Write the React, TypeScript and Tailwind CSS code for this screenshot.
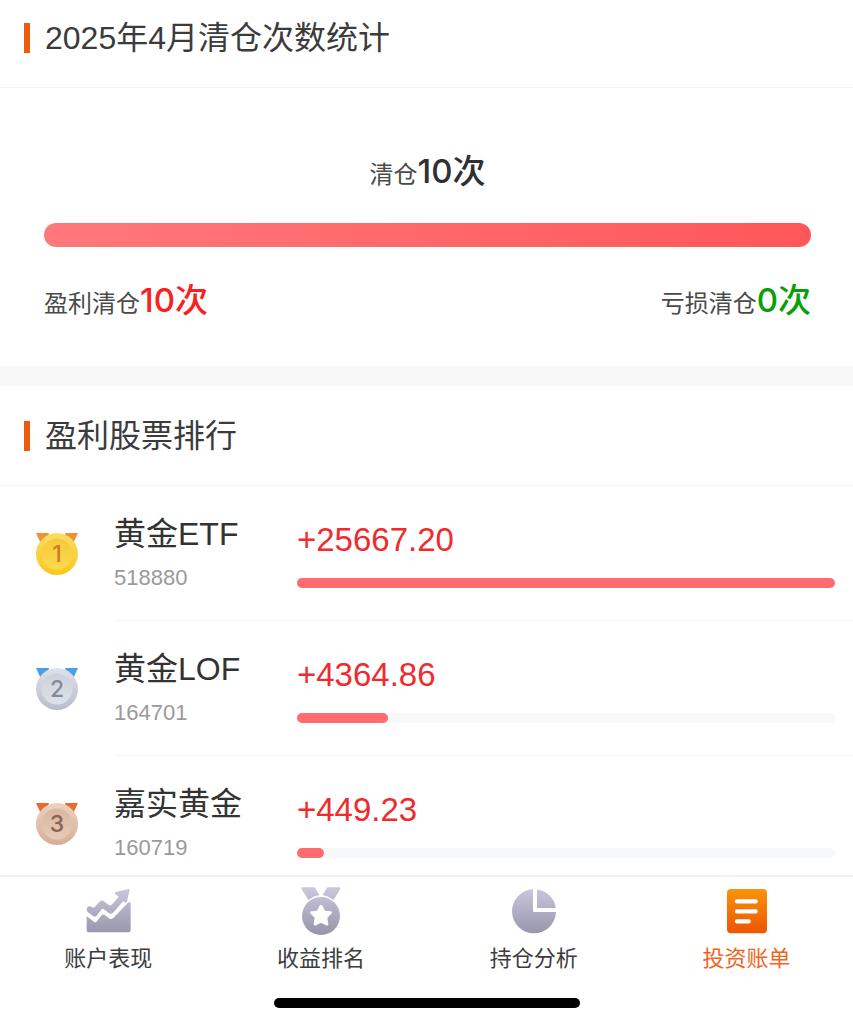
import type { ReactNode } from 'react';

type Medal = {
  ribbon: string;
  rim: [string, string];
  face: [string, string];
  digit: string;
};

type Stock = {
  name: string;
  code: string;
  profit: string;
  percent: number;
  medal: Medal;
};

const stocks: Stock[] = [
  {
    name: '黄金ETF',
    code: '518880',
    profit: '+25667.20',
    percent: 100,
    medal: { ribbon: '#f0913a', rim: ['#fbdc62', '#f9c81c'], face: ['#f6c93c', '#fcd94c'], digit: '#cf7a22' },
  },
  {
    name: '黄金LOF',
    code: '164701',
    profit: '+4364.86',
    percent: 17,
    medal: { ribbon: '#4a9fe6', rim: ['#dfe2ea', '#b9bccb'], face: ['#cbd0da', '#dde2e9'], digit: '#868b97' },
  },
  {
    name: '嘉实黄金',
    code: '160719',
    profit: '+449.23',
    percent: 5,
    medal: { ribbon: '#ea6a2c', rim: ['#ecd2c0', '#d6ae95'], face: ['#d9b7a1', '#e6cab7'], digit: '#8a6350' },
  },
];

function MedalIcon({ rank, medal }: { rank: number; medal: Medal }) {
  return (
    <svg viewBox="0 0 42 42" className="h-[42px] w-[42px] shrink-0" role="img" aria-label={`第${rank}名`}>
      <defs>
        <linearGradient id={`rim-${rank}`} x1="0" y1="0" x2="0" y2="1">
          <stop offset="0" stopColor={medal.rim[0]} />
          <stop offset="1" stopColor={medal.rim[1]} />
        </linearGradient>
        <linearGradient id={`face-${rank}`} x1="0" y1="0" x2="0" y2="1">
          <stop offset="0" stopColor={medal.face[0]} />
          <stop offset="1" stopColor={medal.face[1]} />
        </linearGradient>
      </defs>
      <path d="M0 0H13L10 12L6 13ZM42 0H29L32 12L36 13Z" fill={medal.ribbon} />
      <circle cx="21" cy="21" r="21" fill={`url(#rim-${rank})`} />
      <circle cx="21" cy="21" r="15.500" fill={`url(#face-${rank})`} />
      <text x="21" y="29" textAnchor="middle" fontSize="23" fontWeight="500" fill={medal.digit} className="font-['Inter',sans-serif]">
        {rank}
      </text>
    </svg>
  );
}

function NavIcon({ id, colors = ['#cac7dd', '#9896aa'], children }: { id: string; colors?: [string, string]; children: ReactNode }) {
  return (
    <svg viewBox="0 0 144 144" className="h-12 w-12" fill={`url(#${id})`} aria-hidden="true">
      <defs>
        <linearGradient id={id} gradientUnits="userSpaceOnUse" x1="72" y1="4" x2="72" y2="140">
          <stop offset="0" stopColor={colors[0]} />
          <stop offset="1" stopColor={colors[1]} />
        </linearGradient>
      </defs>
      {children}
    </svg>
  );
}

const tabs = [
  {
    label: '账户表现',
    icon: (
      <NavIcon id="nav-chart">
        <path d="M8 67Q8 60 14 58Q19 57 23 60Q28 64 32 60L48 43Q54 38 60 43L74 54Q79 57 83 53L104 30L93 20Q91 16 96 15L134 6Q138 6 137 10L128 45Q126 49 122 46L118 42L87 77Q81 83 74 78L59 66Q56 64 53 67L38 86Q33 91 27 87L11 75Q8 73 8 67Z" />
        <path d="M8 88L30 104Q35 108 39 103L53 85Q57 80 62 84L77 95Q82 98 87 94L132 47Q139 42 140 50V130Q140 136 134 136H13Q8 136 8 130Z" />
      </NavIcon>
    ),
  },
  {
    label: '收益排名',
    icon: (
      <NavIcon id="nav-medal">
        <path d="M17 1H51Q54 1 55 4L67 24Q49 27 34 39L14 6Q12 1 17 1ZM127 1H93Q90 1 89 4L77 24Q95 27 110 39L130 6Q132 1 127 1Z" />
        <path
          fillRule="evenodd"
          d="M72 30A57 57 0 1 1 72 144A57 57 0 1 1 72 30ZM67 57L60 71L43 73Q36 75 41 80L53 92L50 110Q50 118 57 115L72 107L87 115Q94 118 94 110L91 92L103 80Q108 75 101 73L84 71L77 57Q72 51 67 57Z"
        />
      </NavIcon>
    ),
  },
  {
    label: '持仓分析',
    icon: (
      <NavIcon id="nav-pie">
        <path d="M69 7V71Q69 75 73 75H138A66 66 0 1 1 69 7Z" />
        <path d="M81 11Q81 7 85 8A66 66 0 0 1 137 59Q138 63 134 63H81Z" />
      </NavIcon>
    ),
  },
  {
    label: '投资账单',
    active: true,
    icon: (
      <NavIcon id="nav-bill" colors={['#fb9409', '#ec5503']}>
        <rect x="12" y="6" width="120" height="133" rx="12" />
        <path d="M42 43H98M42 73H98M42 103H77" fill="none" stroke="#fff" strokeWidth="13" strokeLinecap="round" />
      </NavIcon>
    ),
  },
];

function SectionTitle({ children, className }: { children: ReactNode; className: string }) {
  return (
    <div className={`flex items-center gap-[15px] border-b border-[#f3f3f4] px-6 ${className}`}>
      <span className="h-[30px] w-[6px] bg-[#ec5a0c]" />
      <h2 className="text-[32px] leading-10 text-[#3b3b3c]">{children}</h2>
    </div>
  );
}

function CountLabel({ label, count, color }: { label: string; count: number; color: string }) {
  return (
    <p className="text-[24px] leading-10 text-[#4a4a4b]">
      {label}
      <strong className={`font-['Inter','Noto_Sans_CJK_SC',sans-serif] text-[33px] font-medium ${color}`}>{count}次</strong>
    </p>
  );
}

function StockRow({ stock, rank }: { stock: Stock; rank: number }) {
  return (
    <li className="flex items-center gap-9 pl-9">
      <MedalIcon rank={rank} medal={stock.medal} />
      <div className="flex h-[135px] flex-1 border-b border-[#f3f3f4] pr-[18px] pt-7">
        <div className="w-[183px] shrink-0">
          <h3 className="text-[32px] leading-10 text-[#333334]">{stock.name}</h3>
          <p className="mt-2 text-[22px] leading-8 text-[#9a9a9b]">{stock.code}</p>
        </div>
        <div className="flex-1 pt-1.5">
          <p className="text-[33px] leading-10 text-[#f02b2d]">{stock.profit}</p>
          <div className="mt-[18px] h-2.5 rounded-full bg-[#f7f8fa]">
            <div className="h-full rounded-full bg-[#ff6b6e]" style={{ width: `${stock.percent}%` }} />
          </div>
        </div>
      </div>
    </li>
  );
}

export default function App() {
  return (
    <div className="flex h-screen flex-col bg-white font-['Liberation_Sans','Noto_Sans_CJK_SC',sans-serif]" lang="zh-CN">
      <main className="min-h-0 flex-1 overflow-hidden">
        <section>
          <SectionTitle className="h-[88px] pb-3">2025年4月清仓次数统计</SectionTitle>
          <div className="pb-[42px] pl-11 pr-[42px] pt-[63px]">
            <div className="flex justify-center">
              <CountLabel label="清仓" count={10} color="text-[#2f3031]" />
            </div>
            <div className="mt-7 h-6 rounded-full bg-linear-to-r from-[#ff787b] to-[#ff5659]" />
            <div className="mt-[33px] flex justify-between">
              <CountLabel label="盈利清仓" count={10} color="text-[#fa2020]" />
              <CountLabel label="亏损清仓" count={0} color="text-[#08a008]" />
            </div>
          </div>
        </section>
        <div className="h-5 bg-[#f8f8f8]" />
        <section>
          <SectionTitle className="h-[100px]">盈利股票排行</SectionTitle>
          <ul>
            {stocks.map((stock, index) => (
              <StockRow key={stock.code} stock={stock} rank={index + 1} />
            ))}
          </ul>
        </section>
      </main>
      <footer className="border-t-2 border-[#f2f2f3] bg-white pb-4 pt-2.5">
        <nav className="grid grid-cols-4 pl-0.5">
          {tabs.map((tab) => (
            <button
              key={tab.label}
              type="button"
              aria-current={tab.active ? 'page' : undefined}
              className={`flex flex-col items-center gap-2 text-[22px] leading-8 ${tab.active ? 'text-[#f1641c]' : 'text-[#3c3c3d]'}`}
            >
              {tab.icon}
              {tab.label}
            </button>
          ))}
        </nav>
        <div className="mx-auto mt-[23px] h-2.5 w-[306px] rounded-full bg-black" />
      </footer>
    </div>
  );
}
